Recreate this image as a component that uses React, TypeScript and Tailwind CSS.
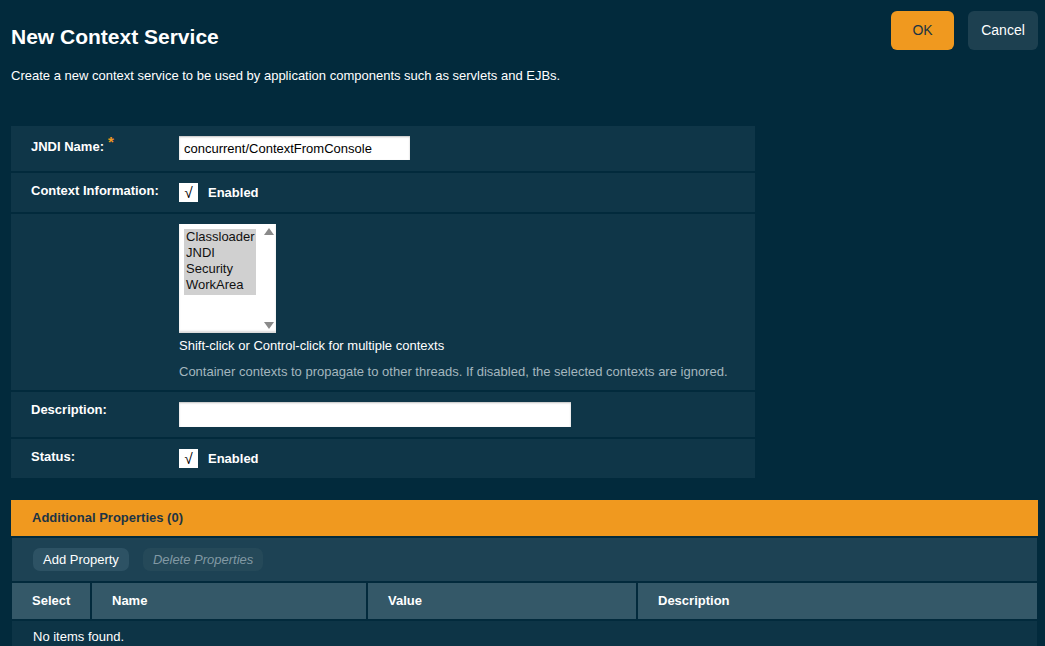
import { useState } from 'react';

const font = { fontFamily: '"Liberation Sans", Arial, sans-serif' };

function Check({ checked }: { checked: boolean }) {
    return (
        <span className="w-[19px] h-[19px] bg-white flex items-center justify-center text-black text-[15px] font-normal leading-none">
            {checked ? '√' : ''}
        </span>
    );
}

export default function App() {
    const [contextOn] = useState(true);
    const [statusOn] = useState(true);
    const contexts = ['Classloader', 'JNDI', 'Security', 'WorkArea'];
    const columns = ['Select', 'Name', 'Value', 'Description'];

    return (
        <div className="min-h-[646px] bg-[#022a3c] text-white overflow-hidden" style={font}>
            <div className="flex justify-between pl-[11px] pr-[7px]">
                <h1 className="mt-[25px] text-[21px] leading-[24px] font-bold">New Context Service</h1>
                <div className="flex gap-[14px] mt-[11px]">
                    <button className="w-[63px] h-[39px] rounded-[6px] bg-[#f0991f] text-[#1b3443] text-[14px]">OK</button>
                    <button className="w-[70px] h-[39px] rounded-[6px] bg-[#1d4050] text-white text-[14px]">Cancel</button>
                </div>
            </div>
            <p className="ml-[11px] mt-[18px] text-[13px] leading-[16px]">
                Create a new context service to be used by application components such as servlets and EJBs.
            </p>

            {/* form */}
            <div className="ml-[11px] mt-[42px] w-[744px] flex flex-col gap-[2px] text-[13px] leading-[16px]">
                <div className="flex bg-[#0f3648]">
                    <div className="w-[168px] pl-[20px] pt-[12px] font-bold">
                        JNDI Name:<span className="text-[#f0991f] text-[15px] relative -top-[4px] ml-[4px]">*</span>
                    </div>
                    <div className="pt-[10px] pb-[11px]">
                        <input
                            readOnly
                            value="concurrent/ContextFromConsole"
                            className="w-[231px] h-[24px] bg-white text-black text-[13px] px-[5px] outline-none shadow-[inset_0_1px_2px_rgba(0,0,0,0.25)]"
                            style={font}
                        />
                    </div>
                </div>

                <div className="flex bg-[#0f3648]">
                    <div className="w-[168px] pl-[20px] pt-[10px] font-bold">Context Information:</div>
                    <div className="py-[10px] flex items-center gap-[10px] font-bold">
                        <Check checked={contextOn} />
                        <span>Enabled</span>
                    </div>
                </div>

                <div className="flex bg-[#0f3648]">
                    <div className="w-[168px]" />
                    <div className="pt-[10px] pb-[10px]">
                        <div className="w-[97px] h-[109px] bg-white flex shadow-[inset_0_-2px_2px_rgba(0,0,0,0.15)]">
                            <div className="flex-1 pl-[5px] pt-[5px]">
                                <div className="w-[72px] bg-[#d0d0d0] text-[#111] text-[13px] leading-[16px] pl-[2px] pb-[2px]">
                                    {contexts.map(c => (
                                        <div key={c}>{c}</div>
                                    ))}
                                </div>
                            </div>
                            <div className="w-[15px] flex flex-col justify-between items-center py-[4px]">
                                <svg width="10" height="7" viewBox="0 0 10 7"><path d="M5 0 L10 7 L0 7 Z" fill="#8a8a8a" /></svg>
                                <svg width="10" height="7" viewBox="0 0 10 7"><path d="M0 0 L10 0 L5 7 Z" fill="#8a8a8a" /></svg>
                            </div>
                        </div>
                        <div className="mt-[5px]">Shift-click or Control-click for multiple contexts</div>
                        <div className="mt-[10px] text-[#a4b6bf]">
                            Container contexts to propagate to other threads. If disabled, the selected contexts are ignored.
                        </div>
                    </div>
                </div>

                <div className="flex bg-[#0f3648]">
                    <div className="w-[168px] pl-[20px] pt-[10px] font-bold">Description:</div>
                    <div className="py-[10px]">
                        <input
                            readOnly
                            value=""
                            className="w-[392px] h-[25px] bg-white text-black px-[5px] outline-none shadow-[inset_0_1px_2px_rgba(0,0,0,0.25)]"
                        />
                    </div>
                </div>

                <div className="flex bg-[#0f3648]">
                    <div className="w-[168px] pl-[20px] pt-[10px] font-bold">Status:</div>
                    <div className="py-[10px] flex items-center gap-[10px] font-bold">
                        <Check checked={statusOn} />
                        <span>Enabled</span>
                    </div>
                </div>
            </div>

            {/* additional properties */}
            <div className="ml-[11px] mr-[7px] mt-[22px] text-[13px] leading-[16px]">
                <div className="h-[36px] bg-[#f0991f] flex items-center pl-[21px] font-bold text-[#1d3444]">
                    Additional Properties (0)
                </div>
                <div className="mx-[1px] mt-[2px] flex flex-col gap-[2px]">
                    <div className="h-[43px] bg-[#1d4254] flex items-center gap-[14px] pl-[21px]">
                        <button className="h-[23px] px-[10px] rounded-[7px] bg-[#2d5264] text-white text-[13px]">Add Property</button>
                        <button className="h-[23px] px-[10px] rounded-[7px] bg-[#254959] text-[#8299a4] italic text-[13px]">
                            Delete Properties
                        </button>
                    </div>
                    <div className="grid grid-cols-[78px_274px_268px_1fr] gap-x-[2px]">
                        {columns.map(c => (
                            <div key={c} className="h-[36px] bg-[#345868] flex items-center pl-[20px] font-bold">
                                {c}
                            </div>
                        ))}
                    </div>
                    <div className="h-[40px] bg-[#0d3446] pl-[21px] pt-[8px]">No items found.</div>
                </div>
            </div>
        </div>
    );
}
